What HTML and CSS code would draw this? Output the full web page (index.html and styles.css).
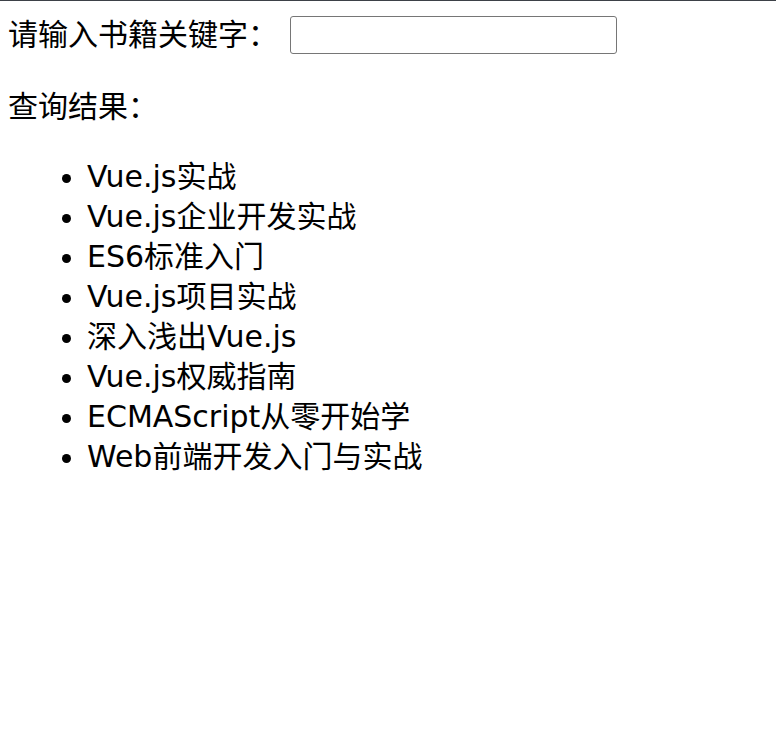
FILE: index.html
```html
<!DOCTYPE html>
<html lang="zh-CN">
<head>
<meta charset="utf-8">
<title>图书查询</title>
<link rel="stylesheet" href="styles.css">
</head>
<body>
<div class="app">
  <div class="search-row">请输入书籍关键字：<input class="search-input" type="text"></div>
  <p class="result-title">查询结果：</p>
  <ul class="book-list">
    <li>Vue.js实战</li>
    <li>Vue.js企业开发实战</li>
    <li>ES6标准入门</li>
    <li>Vue.js项目实战</li>
    <li>深入浅出Vue.js</li>
    <li>Vue.js权威指南</li>
    <li>ECMAScript从零开始学</li>
    <li>Web前端开发入门与实战</li>
  </ul>
</div>
</body>
</html>
```

FILE: styles.css
```css
html {
  border-top: 1px solid #3d4147;
  background: #fff;
}
body {
  margin: 8px;
  font-family: "DejaVu Sans", "Noto Sans CJK SC", sans-serif;
  font-size: 30px;
  line-height: 40px;
  color: #000;
}
.search-row {
  display: flex;
  align-items: center;
  height: 52px;
}
.search-input {
  margin-left: 12px;
  margin-top: -1px;
  width: 327px;
  height: 38px;
  box-sizing: border-box;
  border: 1px solid #767676;
  border-radius: 3px;
  font-size: 13px;
  padding: 1px 2px;
}
.result-title {
  margin: 26px 0 30px;
}
.book-list {
  margin: 30px 0;
  padding-left: 79px;
}
```
